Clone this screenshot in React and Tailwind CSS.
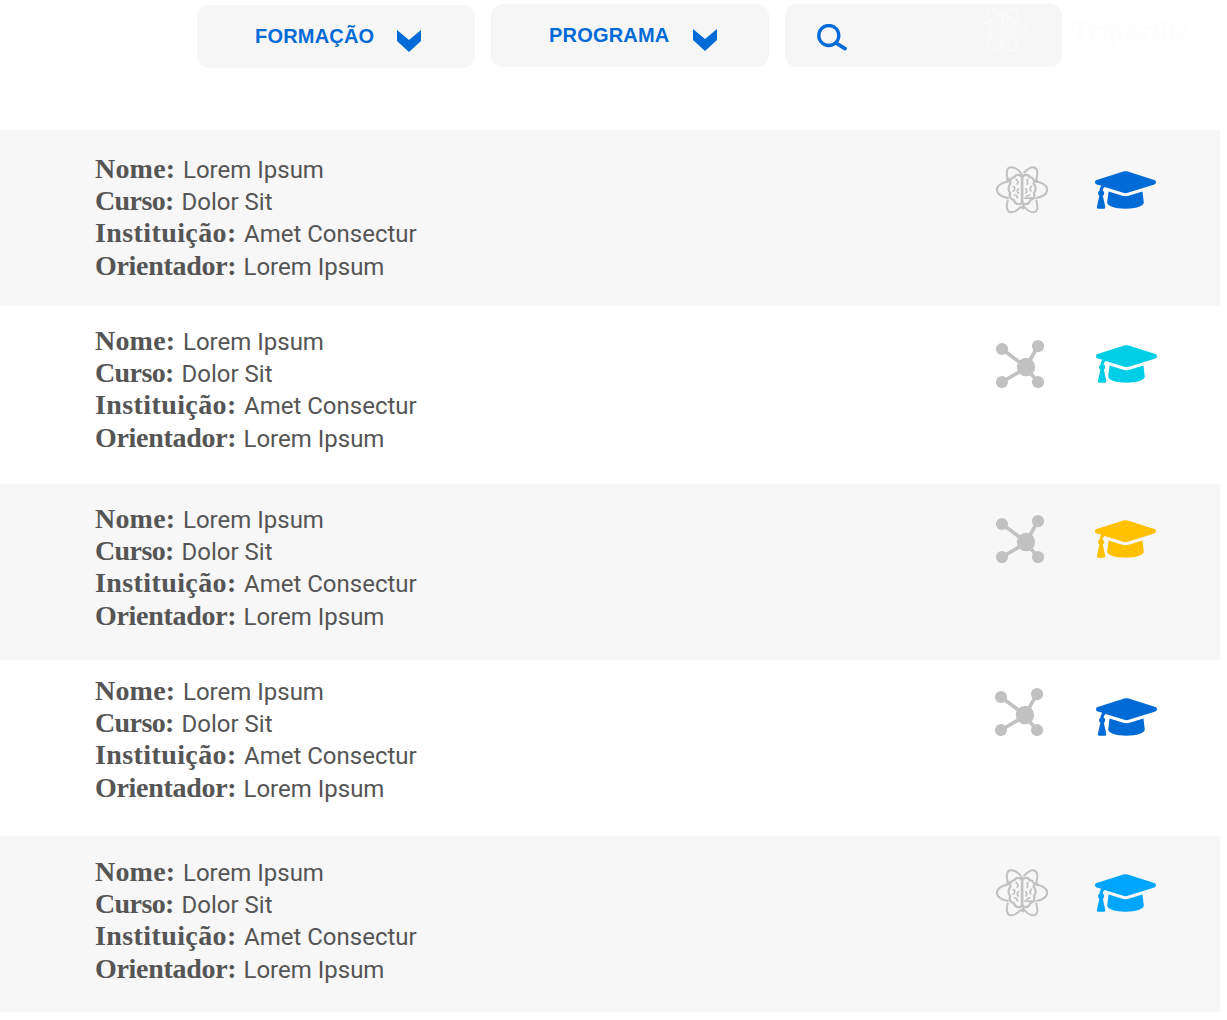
import { FaGraduationCap } from "react-icons/fa";

const rows = [
  {
    height: "h-[176px]",
    text: "pt-[23px]",
    program: "atom",
    programPos: "pt-[36px] pl-[996px]",
    capPos: "pt-[35px] ml-[47px]",
    color: "text-[#006bd6]",
  },
  {
    height: "h-[178px]",
    text: "pt-[19px]",
    program: "molecule",
    programPos: "pt-[34px] pl-[995px]",
    capPos: "pt-[33px] ml-[52px]",
    color: "text-[#00cde6]",
  },
  {
    height: "h-[176px]",
    text: "pt-[19px]",
    program: "molecule",
    programPos: "pt-[31px] pl-[995px]",
    capPos: "pt-[30px] ml-[51px]",
    color: "text-[#ffc000]",
  },
  {
    height: "h-[176px]",
    text: "pt-[15px]",
    program: "molecule",
    programPos: "pt-[28px] pl-[994px]",
    capPos: "pt-[32px] ml-[53px]",
    color: "text-[#006bd6]",
  },
  {
    height: "h-[176px]",
    text: "pt-[20px]",
    program: "atom",
    programPos: "pt-[33px] pl-[996px]",
    capPos: "pt-[32px] ml-[47px]",
    color: "text-[#00a5ff]",
  },
];

export default function App() {
  return (
    <div className="h-[1020px] w-[1227px] overflow-hidden bg-white">
      <header className="flex h-[130px] gap-4 pt-1 pl-[197px] font-['Liberation_Sans',Arial,sans-serif]">
        <FilterButton label="FORMAÇÃO" labelWidth="w-[142px]" className="mt-px" />
        <FilterButton label="PROGRAMA" labelWidth="w-[144px]" />
        <div className="flex h-[63px] w-[277px] shrink-0 rounded-xl bg-[#f6f6f6] pt-[20px] pl-[32px]">
          <SearchIcon />
          <AtomIcon className="-mt-[17px] ml-[128px] h-[46px] w-[54px] text-[#faf9f9]" />
        </div>
        <span className="-ml-[6px] pt-[8px] font-['Liberation_Serif',serif] text-[28px] leading-[36px] font-bold text-[#fefcfc]">
          Tripartite
        </span>
      </header>

      <main className="w-[1220px]">
        {rows.map((row, i) => (
          <StudentRow key={i} {...row} />
        ))}
      </main>
    </div>
  );
}

function FilterButton({ label, labelWidth, className = "" }) {
  return (
    <button
      type="button"
      className={`flex h-[63px] w-[278px] shrink-0 rounded-xl bg-[#f6f6f6] pl-[58px] text-[#006bd6] ${className}`}
    >
      <span
        className={`pt-[19px] text-left text-[20px] leading-[24px] font-bold tracking-[0.2px] whitespace-nowrap ${labelWidth}`}
      >
        {label}
      </span>
      <svg viewBox="0 0 24 22" className="mt-[25px] h-[22px] w-[24px]" fill="currentColor">
        <path d="M0 0 12 10 24 0V11L12 22 0 11Z" />
      </svg>
    </button>
  );
}

function StudentRow({ height, text, program, programPos, capPos, color }) {
  return (
    <section className={`grid ${height} odd:bg-[#f7f7f7]`}>
      <div className={`col-start-1 row-start-1 pl-[95px] text-[#555] ${text}`}>
        <Field label="Nome:" value="Lorem Ipsum" width="w-[88px]" tracking="tracking-[0.2px]" />
        <Field label="Curso:" value="Dolor Sit" width="w-[86.5px]" tracking="tracking-[-0.6px]" />
        <Field label="Instituição:" value="Amet Consectur" width="w-[149px]" tracking="tracking-[0.4px]" />
        <Field label="Orientador:" value="Lorem Ipsum" width="w-[148.5px]" tracking="tracking-[-0.3px]" className="mt-px" />
      </div>
      <div className="col-start-1 row-start-1 flex items-start">
        <div className={programPos}>
          {program === "atom" ? (
            <AtomIcon className="h-[48px] w-[52px] text-[#c1c1c1]" />
          ) : (
            <MoleculeIcon />
          )}
        </div>
        <div className={capPos}>
          <FaGraduationCap preserveAspectRatio="none" className={`h-[50px] w-[61px] ${color}`} />
        </div>
      </div>
    </section>
  );
}

function Field({ label, value, width, tracking, className = "" }) {
  return (
    <p className={`flex h-8 items-baseline leading-8 whitespace-nowrap ${className}`}>
      <strong className={`shrink-0 font-['Liberation_Serif',serif] text-[28px] font-bold ${width} ${tracking}`}>
        {label}
      </strong>
      <span className="font-[Roboto,sans-serif] text-[24px]">{value}</span>
    </p>
  );
}

function SearchIcon() {
  return (
    <svg viewBox="0 0 30 27" className="h-[27px] w-[30px] text-[#006bd6]" fill="none" stroke="currentColor">
      <circle cx="11.8" cy="11.5" r="10" strokeWidth="3.3" />
      <path d="M19 19 28 24.6" strokeWidth="3.8" strokeLinecap="round" />
    </svg>
  );
}

function MoleculeIcon() {
  return (
    <svg viewBox="0 0 49 48" className="h-[48px] w-[49px] text-[#c1c1c1]" fill="currentColor" stroke="none">
      <path d="M7 9 31 27 43 6M7 42 31 28 43 42" fill="none" stroke="currentColor" strokeWidth="3.6" />
      <circle cx="7" cy="9" r="6.1" />
      <circle cx="43" cy="6.1" r="6.1" />
      <circle cx="7" cy="42" r="6.1" />
      <circle cx="43" cy="42" r="6.1" />
      <circle cx="31" cy="27" r="9.2" />
    </svg>
  );
}

// Brain in the middle, with the orbits showing only outside of it
function AtomIcon({ className }) {
  return (
    <svg
      viewBox="0 0 52 48"
      className={className}
      fill="none"
      stroke="currentColor"
      strokeWidth="2"
      strokeLinecap="round"
      strokeLinejoin="round"
    >
      <path d="M12 15.5C5 17 .9 20.3.9 23.8S5 30.5 12 32M40.5 15.5C47.5 17 51.2 20.3 51.2 23.8S47.5 30.5 40.5 32" />
      <path d="M11.7 13C10 6.5 10.7 1.6 14.7 1.3 18.5 1 22.5 3.8 25.8 8M28.2 6.5C31.8 2.8 35.5.9 38 1.4 41.8 2.2 42 7 40.3 13.5" />
      <path d="M11.7 34.5C10 41 10.9 46 14.7 46.3 18.6 46.6 21.5 44.5 24.4 41.2M27 39.5C30.5 43.9 34.5 46.6 37.8 46.3 42 45.8 42 41 40.3 34.5" />
      <g fill="currentColor" stroke="none">
        <circle cx="12" cy="13.5" r="2" />
        <circle cx="40.3" cy="15" r="2" />
        <circle cx="27" cy="41.3" r="2.1" />
      </g>
      <g strokeWidth="2.2">
        <path d="M26 11C24.8 8.3 19.8 7.8 18.3 11.2 14.8 11.6 13.4 14.8 14.6 17.6 11.8 20.2 12 24.8 14.2 26.9 12.7 30.4 14.8 33.8 18 34.2 19.2 39.2 24.6 39.2 26 36.2" />
        <path d="M26.2 11C27.4 8.3 32.4 7.8 33.9 11.2 37.4 11.6 38.8 14.8 37.6 17.6 40.4 20.2 40.2 24.8 38 26.9 39.5 30.4 37.4 33.8 34.2 34.2 33 39.2 27.6 39.2 26.2 36.2" />
        <path d="M26.1 10.5V37" strokeWidth="2.6" />
      </g>
      <path d="M20.2 13.5C22.3 14.7 22.2 16.6 21.2 18M17.2 20.6C19.6 20.8 19.3 24 17 25.2M22.3 22.8C21 23.7 21 26 22.3 27.2M18.5 29C20.4 28.8 21.6 30.3 21.3 32" strokeWidth="1.7" />
      <path d="M31.9 13.5C29.8 14.7 33 16.6 31 18.3M35.5 20.2C34.5 21 33.6 22.5 34.8 25M29.8 22.8C31.2 23.8 31.2 25.6 29.8 27M29 32.2H38.3M33.5 29 30.5 30.2" strokeWidth="1.7" />
    </svg>
  );
}
